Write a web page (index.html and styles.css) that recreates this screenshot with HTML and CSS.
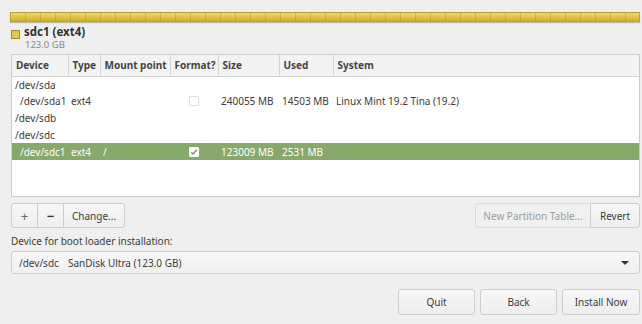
FILE: index.html
```html
<!DOCTYPE html>
<html>
<head>
<meta charset="utf-8">
<link rel="stylesheet" href="styles.css">
</head>
<body>
<div class="page">
  <div class="bar"></div>
  <div class="legend">
    <span class="swatch"></span>
    <div class="legend-text">
      <div class="legend-name">sdc1 (ext4)</div>
      <div class="legend-size">123.0 GB</div>
    </div>
  </div>
  <div class="table-wrap">
    <table class="parts">
      <colgroup>
        <col class="c1"><col class="c2"><col class="c3"><col class="c4"><col class="c5"><col class="c6"><col>
      </colgroup>
      <thead>
        <tr><th>Device</th><th>Type</th><th>Mount point</th><th>Format?</th><th>Size</th><th>Used</th><th class="last">System</th></tr>
      </thead>
      <tbody>
        <tr><td>/dev/sda</td><td></td><td></td><td></td><td></td><td></td><td></td></tr>
        <tr><td class="ind">/dev/sda1</td><td>ext4</td><td></td><td class="chk"><span class="box"></span></td><td>240055 MB</td><td>14503 MB</td><td>Linux Mint 19.2 Tina (19.2)</td></tr>
        <tr><td>/dev/sdb</td><td></td><td></td><td></td><td></td><td></td><td></td></tr>
        <tr><td>/dev/sdc</td><td></td><td></td><td></td><td></td><td></td><td></td></tr>
        <tr class="sel"><td class="ind">/dev/sdc1</td><td>ext4</td><td>/</td><td class="chk"><span class="box on"><svg width="8" height="8" viewBox="0 0 8 8"><path d="M1.2 4.2 L3.2 6 L6.8 1.8" fill="none" stroke="#7a9a5e" stroke-width="1.4"/></svg></span></td><td>123009 MB</td><td>2531 MB</td><td></td></tr>
      </tbody>
    </table>
  </div>
  <div class="tools">
    <div class="group">
      <button class="btn sq">+</button><button class="btn sq minus">&minus;</button><button class="btn change">Change...</button>
    </div>
    <div class="group">
      <button class="btn dis">New Partition Table...</button><button class="btn revert">Revert</button>
    </div>
  </div>
  <div class="label">Device for boot loader installation:</div>
  <div class="combo">
    <span class="dev">/dev/sdc</span><span class="name">SanDisk Ultra (123.0 GB)</span>
    <span class="arrow"></span>
  </div>
  <div class="actions">
    <button class="btn act">Quit</button>
    <button class="btn act">Back</button>
    <button class="btn act">Install Now</button>
  </div>
</div>
</body>
</html>
```

FILE: styles.css
```css
* { box-sizing: border-box; }
html, body { margin: 0; padding: 0; }
body {
  background: #efefef;
  font-family: "Noto Sans", "Open Sans", sans-serif;
  font-size: 10px;
  color: #3c3c3c;
  width: 642px;
  height: 324px;
  overflow: hidden;
}
.page { padding: 12px 2px 0 11px; display: flex; flex-direction: column; }
.bar {
  height: 10px;
  margin-left: -1px;
  border: 1px solid #b8a232;
  background-color: #e2c84c;
  background-image:
    repeating-linear-gradient(to right, transparent 0 14px, rgba(150,125,30,0.35) 14px 15px),
    linear-gradient(to bottom, #efd868 0%, #e0c548 50%, #cdb23a 100%);
  box-shadow: 0 1px 1px rgba(120,100,20,0.35);
}
.legend { display: flex; align-items: flex-start; margin-top: 3px; gap: 4px; }
.swatch { width: 9px; height: 9px; margin-top: 5px; background: #e2c84c; border: 1px solid #9b8a30; }
.legend-name { font-weight: bold; font-size: 11.5px; line-height: 14px; color: #333; }
.legend-size { font-size: 9.5px; color: #8a8a8a; line-height: 10px; margin-top: 1px; margin-left: 1px; }
.table-wrap {
  margin-top: 4px;
  height: 143px;
  background: #fff;
  border: 1px solid #cbcbcb;
}
.parts { border-collapse: collapse; table-layout: fixed; width: 100%; }
.c1 { width: 56px; } .c2 { width: 32px; } .c3 { width: 70px; } .c4 { width: 48px; } .c5 { width: 61px; } .c6 { width: 54px; }
.parts th {
  height: 21px;
  background: #f3f3f3;
  border-bottom: 1px solid #d4d4d4;
  border-right: 1px solid #d4d4d4;
  text-align: left;
  font-weight: bold;
  padding: 0 0 0 4px;
  color: #444;
  white-space: nowrap;
}
.parts th.last { border-right: none; }
.parts td { height: 16.8px; padding: 0 0 0 3px; white-space: nowrap; color: #3a3a3a; }
.parts td.ind { padding-left: 8px; }
.parts td.chk { padding-left: 19px; }
.box { display: block; width: 10px; height: 10px; border: 1px solid #dedede; border-radius: 1px; background: #fff; }
.box.on { border-color: #fff; display: flex; align-items: center; justify-content: center; }
.parts tr.sel td { background: #87a96b; color: #fff; }
.tools { display: flex; justify-content: space-between; margin-top: 6px; }
.group { display: flex; }
.btn {
  font-family: inherit;
  font-size: 10px;
  color: #3c3c3c;
  height: 25px;
  padding: 0;
  background: linear-gradient(#f7f7f7, #eeeeee);
  border: 1px solid #cdcdcd;
  border-radius: 3px;
}
.group .btn + .btn { margin-left: -1px; }
.group .btn:not(:first-child) { border-top-left-radius: 0; border-bottom-left-radius: 0; }
.group .btn:not(:last-child) { border-top-right-radius: 0; border-bottom-right-radius: 0; }
.sq { width: 27px; font-size: 13px; color: #666; }
.minus { color: #333; font-weight: bold; }
.change { width: 62px; }
.dis { width: 116px; color: #9c9c9c; background: #f0f0f0; border-color: #dadada; }
.revert { width: 50px; }
.label { margin-top: 6px; line-height: 14px; color: #3c3c3c; }
.combo {
  margin-top: 3px;
  height: 23px;
  display: flex;
  align-items: center;
  background: linear-gradient(#f7f7f7, #f0f0f0);
  border: 1px solid #cdcdcd;
  border-radius: 3px;
  padding-left: 7px;
  position: relative;
}
.combo .dev { width: 49px; }
.arrow {
  margin-left: auto; margin-right: 10px;
  width: 0; height: 0;
  border-left: 4px solid transparent; border-right: 4px solid transparent; border-top: 4px solid #333;
}
.actions { display: flex; justify-content: flex-end; gap: 5px; margin-top: 15px; }
.act { width: 77px; height: 26px; }
.act:last-child { width: 78px; }
```
